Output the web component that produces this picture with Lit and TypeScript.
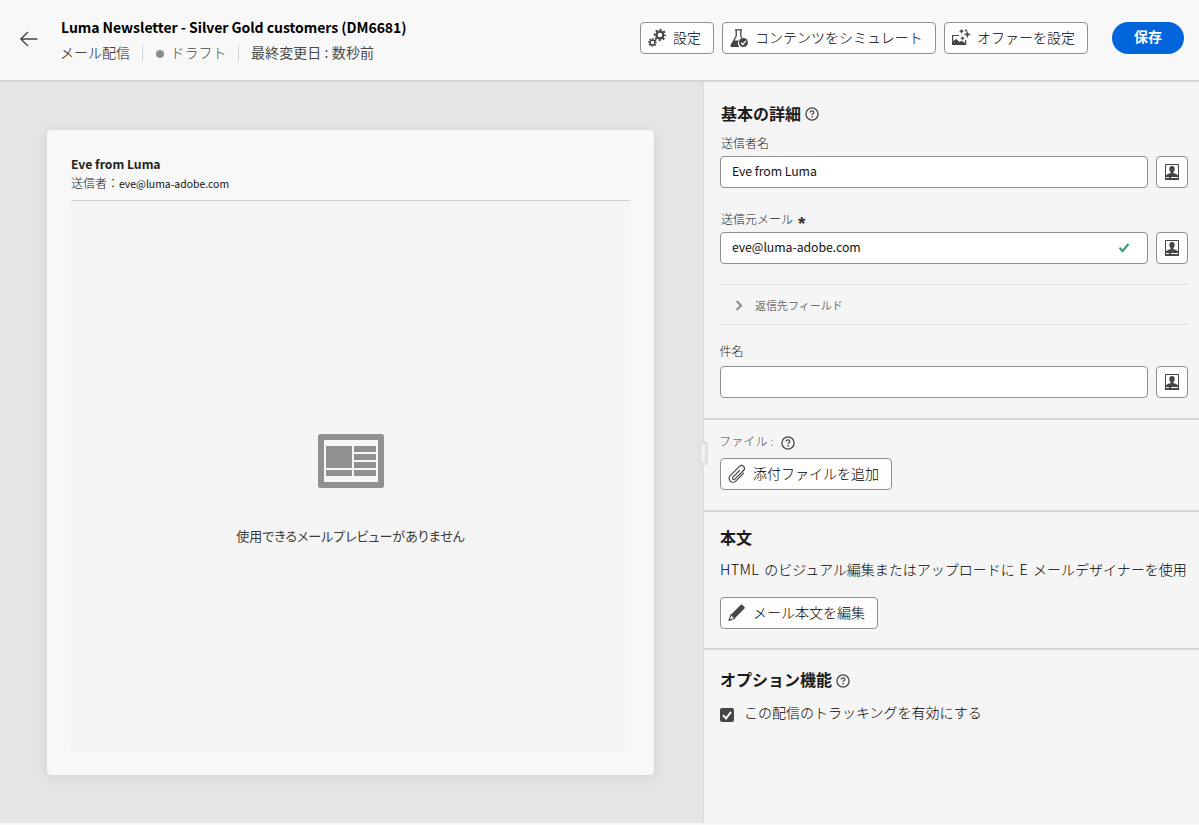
import { LitElement, html, css, svg, nothing } from "lit";
import { customElement, property } from "lit/decorators.js";

const icons: Record<string, unknown> = {
  back: svg`<path d="M.8 9H17.5M8 2L.8 9L8 16" fill="none" stroke="#464646" stroke-width="1.4"/>`,
  gears: svg`
    <circle cx="11.9" cy="6" r="3.4" fill="none" stroke="#464646" stroke-width="2.2"/>
    <circle cx="11.9" cy="6" r="5.1" fill="none" stroke="#464646" stroke-width="2.2" stroke-dasharray="2 2.005" stroke-dashoffset="1"/>
    <circle cx="4.5" cy="13.4" r="2.500" fill="none" stroke="#464646" stroke-width="1.5"/>
    <circle cx="4.5" cy="13.4" r="3.7" fill="none" stroke="#464646" stroke-width="1.5" stroke-dasharray="1.45 1.456" stroke-dashoffset=".7"/>`,
  flask: svg`
    <path d="M5 .9h7M6.2 1v6.2L1.2 16.4q-.4 1 .6 1H9M10.8 1v6.2l1 2" fill="none" stroke="#464646" stroke-width="1.3"/>
    <path d="M3.6 11.4h5.2a5.4 5.4 0 0 0 .6 6.4H1.6Q.2 17.6.9 16.2z" fill="#464646"/>
    <circle cx="13.4" cy="13.5" r="4.5" fill="#464646"/>
    <path d="M11 13.6l1.8 1.9 3-3.7" fill="none" stroke="#fff" stroke-width="1.3"/>`,
  offer: svg`
    <path d="M7 6.500H.6v9h13v-4.500" fill="none" stroke="#464646" stroke-width="1.200"/>
    <path d="M.6 12.800l2.600-2.300q.8-.6 1.600 0l2.700 2.400 1.400-.8q.8-.4 1.500.1l3.200 2V16H.6z" fill="#464646"/>
    <path d="M15.300 2.200l.9 2.300 2.300.9-2.300.9-.9 2.400-.9-2.400-2.300-.9 2.300-.9zM9.500 0l.7 1.500 1.500.7-1.500.7-.7 1.500-.7-1.500-1.500-.7 1.500-.7zM14 .2l.4.9.9.4-.9.4-.4.9-.4-.9-.9-.4.900-.4zM10.500 7.300l.6 1.400 1.400.6-1.400.6-.6 1.400-.6-1.400-1.400-.6 1.400-.6z" fill="#464646" stroke="#464646" stroke-width=".3"/>`,
  help: svg`
    <circle cx="7" cy="7" r="6.1" fill="none" stroke="#464646" stroke-width="1.3"/>
    <path d="M5.1 5.5Q5.3 3.9 7 3.9q1.8 0 1.8 1.5 0 .9-.9 1.4-.8.5-.8 1.3" fill="none" stroke="#464646" stroke-width="1.25"/>
    <rect x="6.35" y="9" width="1.4" height="1.4" fill="#464646"/>`,
  person: svg`
    <path d="M.5.5h13v15H.5z" fill="#fff" stroke="#464646"/>
    <path d="M7 2c1.900 0 2.800 1.300 2.700 3 0 1.200-.5 2.200-1.200 2.900v1.300c1.700.5 4 .9 4.500 2.400V13H1v-1.400c.5-1.500 2.800-1.900 4.500-2.400V7.900C4.800 7.200 4.300 6.200 4.300 5 4.200 3.300 5.100 2 7 2z" fill="#464646"/>
    <path d="M0 12.800h14V16H0z" fill="#464646"/>
    <path d="M1 13.500h3M6 13.500h7" stroke="#fff" stroke-width="1"/>`,
  check: svg`<path d="M1.500 4.700l3 3.400L10.500 1" fill="none" stroke="#2d9d78" stroke-width="2"/>`,
  chevron: svg`<path d="M1.600 1l4.400 4.500L1.600 10" fill="none" stroke="#8e8e8e" stroke-width="2.100"/>`,
  clip: svg`<path transform="translate(9.200 9) rotate(45)" d="M4-5.600V6a3.900 3.900 0 0 1-7.800 0V-7a2.900 2.900 0 0 1 5.800 0V5.300a1.100 1.100 0 0 1-2.800 0V-4.500" fill="none" stroke="#464646" stroke-width="1.200"/>`,
  pencil: svg`
    <path d="M12.800.8q.7-.7 1.400 0l2.300 2.300q.7.700 0 1.400L6.800 14.300 3.100 10.600z" fill="#464646"/>
    <path d="M3.100 10.600L1 16.400l5.800-2.100z" fill="#fff" stroke="#464646" stroke-width="1.100" stroke-linejoin="round"/>
    <path d="M.6 16.800l1-2.400 1.400 1.400z" fill="#464646"/>`,
  layout: svg`
    <rect x="3" y="3" width="60" height="48" fill="#f7f7f7"/>
    <path fill-rule="evenodd" d="M2.500 0h61Q66 0 66 2.500v49Q66 54 63.500 54h-61Q0 54 0 51.500v-49Q0 0 2.500 0zM6 6v42h54V6z" fill="#909090"/>
    <path d="M8 12h26v22H8zM8 36h26v6H8zM36 12h22v6H36zM36 20h22v6H36zM36 28h22v6H36zM36 36h22v6H36z" fill="#909090"/>`,
  tick: svg`<path d="M3 7.200l3 3.300 5-6.600" fill="none" stroke="#fff" stroke-width="2"/>`,
};

const icon = (name: string, w: number, h: number) => html`
  <svg width=${w} height=${h} viewBox="0 0 ${w} ${h}">${icons[name]}</svg>`;

const base = css`
  * { box-sizing: border-box; }
  svg { display: block; flex: none; overflow: visible; }
`;

@customElement("outline-button")
class OutlineButton extends LitElement {
  @property() icon = "";
  @property() label = "";
  static styles = [base, css`
    :host { display: block; flex: none; }
    .btn {
      display: flex; align-items: center; gap: 6px; width: 100%; height: 32px;
      padding: 0 0 0 7px; border: 1px solid #8f8f8f; border-radius: 4px;
      background: #fdfdfd; color: #000; white-space: nowrap;
      font: 300 14px/26px "Noto Sans CJK JP", sans-serif;
    }
    .text { padding: 0 0 3px 1px; }
    .only { justify-content: center; padding: 0; }
  `];
  render() {
    const only = !this.label;
    return html`<button class="btn ${only ? "only" : ""}">
      ${only ? icon(this.icon, 14, 16) : icon(this.icon, 18, 18)}
      ${only ? nothing : html`<span class="text">${this.label}</span>`}
    </button>`;
  }
}

@customElement("text-field")
class TextField extends LitElement {
  @property() label = "";
  @property() value = "";
  @property({ type: Boolean }) required = false;
  @property({ type: Boolean }) valid = false;
  @property({ type: Boolean }) raised = false;
  static styles = [base, css`
    :host { display: block; }
    .label {
      display: flex; align-items: center; height: 24px; padding: 0 0 2px 1px; color: #222;
      font: 300 12px/22px "Noto Sans CJK JP", sans-serif;
    }
    .raised { padding: 0 0 6px; line-height: 18px; text-indent: -.5px; }
    .star { margin: 9px 0 0 5px; font: 700 19px/16px "Liberation Sans", sans-serif; color: #333; }
    .row { display: flex; gap: 8px; }
    .box {
      flex: 1; display: flex; justify-content: space-between; align-items: center;
      height: 32px; padding: 0 18px 0 11px; border: 1px solid #8f8f8f; border-radius: 4px;
      background: #fff; color: #111; font: 400 12.300px/28px "Noto Sans CJK JP", sans-serif;
    }
    .value { padding-bottom: 2px; letter-spacing: -.06px; }
    .side { width: 32px; }
  `];
  render() {
    return html`
      <div class="label ${this.raised ? "raised" : ""}">${this.label}${this.required ? html`<span class="star">*</span>` : nothing}</div>
      <div class="row">
        <div class="box"><span class="value">${this.value}</span>${this.valid ? icon("check", 11, 10) : nothing}</div>
        <outline-button class="side" icon="person"></outline-button>
      </div>`;
  }
}

@customElement("app-root")
class AppRoot extends LitElement {
  static styles = [base, css`
    :host {
      display: flex; flex-direction: column; width: 1199px; height: 825px; overflow: hidden;
      background: #f8f8f8; color: #111; font: 400 14px/20px "Noto Sans CJK JP", sans-serif;
    }
    .header { display: flex; height: 82px; border-bottom: 2px solid #d5d5d5; padding-left: 20px; flex: none; }
    .back { padding-top: 30px; width: 41px; }
    .titles { flex: 1; padding-top: 17px; white-space: nowrap; }
    .title { font-size: 14px; font-weight: 700; line-height: 20px; color: #000; letter-spacing: -.04px; }
    .meta { display: flex; align-items: center; height: 20px; margin-top: 6px; font-weight: 300; line-height: 18px; }
    .meta span { padding-bottom: 2px; }
    .meta .sep { width: 1px; height: 18px; background: #d5d5d5; padding: 0; }
    .kind { width: 81px; text-indent: -1px; }
    .meta .dot { width: 8px; height: 8px; border-radius: 50%; background: #8e8e8e; margin: 2px 7px 0 13px; padding: 0; }
    .state { width: 67px; color: #4b4b4b; text-indent: -.5px; }
    .changed { margin-left: 12px; font-weight: 400; color: #4b4b4b; letter-spacing: .08px; }
    .actions { display: flex; gap: 8px; padding: 22px 15px 0 0; }
    .w74 { width: 74px; } .w214 { width: 214px; } .w144 { width: 144px; }
    .w172 { width: 172px; } .w158 { width: 158px; }
    .save {
      width: 72px; height: 32px; margin-left: 16px; padding: 0 0 4px; border: 0; border-radius: 16px;
      background: #0265dc; color: #fff; font: 700 14px/28px "Noto Sans CJK JP", sans-serif;
    }
    .main { display: flex; height: 741px; flex: none; }
    .preview { width: 702px; background: #e5e5e5; padding: 48px 48px 48px 47px; }
    .card {
      height: 645px; padding: 24px; border-radius: 4px; background: #f8f8f8;
      box-shadow: 0 2px 14px rgba(0, 0, 0, .09);
    }
    .from { font-size: 12.200px; font-weight: 700; line-height: 20px; color: #222; }
    .sender { font-size: 10.450px; line-height: 18px; height: 27px; border-bottom: 1px solid #d0d0d0; }
    .jp { font-size: 12px; font-weight: 300; }
    .empty {
      display: flex; flex-direction: column; align-items: center; height: 550px; padding-top: 233px;
      background: #f5f5f5; border-radius: 0 0 4px 4px;
    }
    .none { margin-top: 38px; font-size: 13px; color: #3a3a3a; font-feature-settings: "palt"; white-space: nowrap; }
    .splitter { position: relative; width: 2px; background: #e0e0e0; }
    .grip {
      position: absolute; left: -4px; top: 359px; width: 10px; height: 24px; border-radius: 2px;
      border: 3px solid #e0e0e0; background: #f0f0f0;
    }
    .form { flex: 1; background: #f5f5f5; }
    .section { padding: 0 11px 0 16px; border-bottom: 2px solid #d5d5d5; }
    .basic { height: 338px; padding-top: 22px; }
    .files { height: 92px; padding-top: 11px; }
    .body { height: 138px; padding-top: 16px; }
    .options { padding-top: 20px; border: 0; }
    .heading { display: flex; align-items: center; gap: 4px; height: 20px; font-size: 16px; font-weight: 700; line-height: 18px; color: #1c1c1c; }
    .heading span { padding-bottom: 2px; }
    .inset { padding-left: 1px; }
    .first { margin-top: 8px; }
    .second { margin-top: 20px; }
    .reply {
      display: flex; align-items: center; height: 41px; margin-top: 20px; padding-left: 15px; gap: 12px;
      border: 1px solid #e0e0e0; border-width: 1px 0; font-size: 11px; color: #6e6e6e;
    }
    .reply svg { margin-top: 1px; }
    .third { margin-top: 17px; }
    .filelabel { display: flex; align-items: center; gap: 7px; height: 24px; font-size: 12px; line-height: 20px; font-weight: 300; color: #444; }
    .filelabel span { padding-bottom: 4px; text-indent: -1px; letter-spacing: .15px; }
    .filelabel svg { margin-top: -1px; }
    .desc { height: 20px; margin: 11px -8px 0 0; font-weight: 300; white-space: nowrap; color: #000; word-spacing: 1.700px; }
    .latin { font-size: 14.500px; letter-spacing: .4px; line-height: 1; }
    .edit { margin-top: 18px; }
    .add { margin-top: 3px; }
    .options svg { margin-top: 1px; }
    .checkrow { display: flex; align-items: center; gap: 10px; margin-top: 13px; height: 22px; font-weight: 300; line-height: 18px; color: #000; }
    .checklabel { padding-bottom: 4px; }
    .checkbox { width: 14px; height: 14px; margin-top: 2px; border-radius: 2px; background: #464646; }
    .checkbox svg { margin: 0; }
  `];

  render() {
    return html`
      <header class="header">
        <div class="back">${icon("back", 18, 18)}</div>
        <div class="titles">
          <div class="title">Luma Newsletter - Silver Gold customers (DM6681)</div>
          <div class="meta">
            <span class="kind">メール配信</span><span class="sep"></span>
            <span class="dot"></span><span class="state">ドラフト</span><span class="sep"></span>
            <span class="changed">最終変更日 : 数秒前</span>
          </div>
        </div>
        <div class="actions">
          <outline-button class="w74" icon="gears" label="設定"></outline-button>
          <outline-button class="w214" icon="flask" label="コンテンツをシミュレート"></outline-button>
          <outline-button class="w144" icon="offer" label="オファーを設定"></outline-button>
          <button class="save">保存</button>
        </div>
      </header>
      <main class="main">
        <div class="preview">
          <div class="card">
            <div class="from">Eve from Luma</div>
            <div class="sender"><span class="jp">送信者：</span>eve@luma-adobe.com</div>
            <div class="empty">
              ${icon("layout", 66, 54)}
              <div class="none">使用できるメールプレビューがありません</div>
            </div>
          </div>
        </div>
        <div class="splitter"><div class="grip"></div></div>
        <div class="form">
          <section class="section basic">
            <div class="heading inset"><span>基本の詳細</span>${icon("help", 14, 14)}</div>
            <text-field class="first" label="送信者名" value="Eve from Luma"></text-field>
            <text-field class="second" label="送信元メール" value="eve@luma-adobe.com" required valid></text-field>
            <div class="reply">${icon("chevron", 8, 11)}返信先フィールド</div>
            <text-field class="third" label="件名" raised></text-field>
          </section>
          <section class="section files">
            <div class="filelabel"><span>ファイル :</span>${icon("help", 14, 14)}</div>
            <outline-button class="w172 add" icon="clip" label="添付ファイルを追加"></outline-button>
          </section>
          <section class="section body">
            <div class="heading"><span>本文</span></div>
            <div class="desc"><span class="latin">HTML</span> のビジュアル編集またはアップロードに <span class="latin">E</span> メールデザイナーを使用</div>
            <outline-button class="w158 edit" icon="pencil" label="メール本文を編集"></outline-button>
          </section>
          <section class="section options">
            <div class="heading"><span>オプション機能</span>${icon("help", 14, 14)}</div>
            <div class="checkrow"><span class="checkbox">${icon("tick", 14, 14)}</span><span class="checklabel">この配信のトラッキングを有効にする</span></div>
          </section>
        </div>
      </main>`;
  }
}
